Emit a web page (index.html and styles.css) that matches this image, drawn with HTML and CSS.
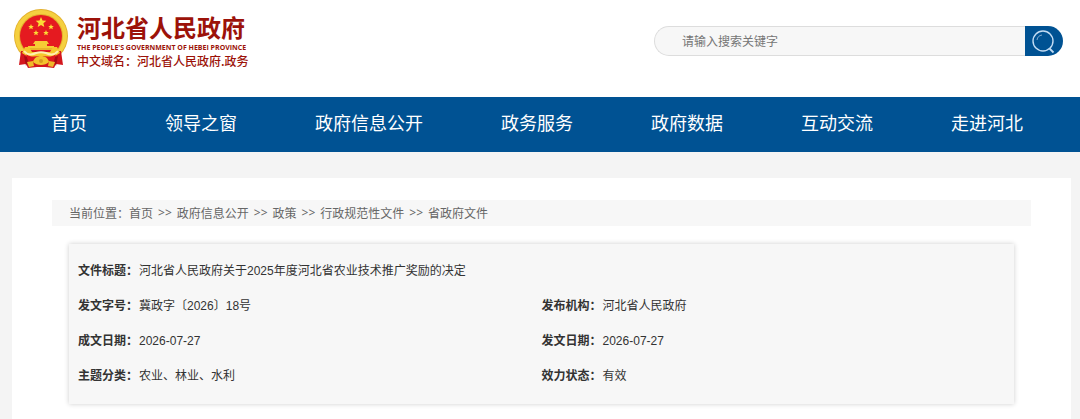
FILE: index.html
```
<!DOCTYPE html>
<html lang="zh-CN">
<head>
    <meta charset="UTF-8">
    <meta name="viewport" content="width=device-width, initial-scale=1.0">
    <title>河北省人民政府</title>
    <link rel="stylesheet" href="styles.css">
</head>
<body>
    <header class="header">
        <a href="#" class="logo">
            <svg class="emblem" viewBox="0 0 54 60" aria-hidden="true">
                <circle cx="27" cy="27" r="27" fill="#e3b02c"/>
                <circle cx="27" cy="27" r="24" fill="none" stroke="#f5d040" stroke-width="4"/>
                <circle cx="27" cy="27" r="21" fill="#e51a20"/>
                <path d="M7 42L5 56l7-1 2 4 9-1h8l9 1 2-4 7 1-2-14z" fill="#d3161d"/>
                <path d="M10 47l2 10 3-8zM44 47l-2 10-3-8z" fill="#a90c14"/>
                <path d="M27 8l1.500 3.500 3.800.3-2.900 2.500.9 3.700-3.300-2-3.300 2 .9-3.700-2.900-2.500 3.800-.3z" fill="#fbdc35"/>
                <g fill="#fbdc35">
                    <path id="star" d="M17 15l.8 1.900 2 .1-1.500 1.300.5 2-1.800-1.100-1.800 1.100.5-2-1.500-1.300 2-.1z"/>
                    <use href="#star" x="20"/>
                    <use href="#star" x="5" y="6"/>
                    <use href="#star" x="15" y="6"/>
                </g>
                <path d="M21 32h12l2 3h-2v2h7v4H14v-4h7v-2h-2z" fill="#f6cd35"/>
                <path d="M14 40h26" stroke="#d99a20"/>
                <path d="M11 38h4l3 5h18l3-5h4l3 6-8 5H16l-8-5z" fill="#f6c62c"/>
                <path d="M12 45c5 4 10 2 15 2s10 2 15-2l-2 7c-4 1-8-2-13-2s-9 3-13 2z" fill="#df171e"/>
                <path d="M10 42c4 5 8 4 12 2 3-1 7-1 10 0 4 2 8 3 12-2" fill="none" stroke="#fff0b0" stroke-width="2"/>
                <path d="M19 53c1-4 4-6 8-6s7 2 8 6c-4 4-12 4-16 0z" fill="#f3c22e"/>
                <circle cx="27" cy="52" r="2" fill="#d99a20"/>
                <path d="M13 53l6-1 1 5-5 1zM41 53l-6-1-1 5 5 1z" fill="#efb92a"/>
            </svg>
            <span class="logo-text">
                <strong class="logo-name">河北省人民政府</strong>
                <span class="logo-en">THE PEOPLE'S GOVERNMENT OF HEBEI PROVINCE</span>
                <span class="logo-domain">中文域名：河北省人民政府.政务</span>
            </span>
        </a>
        <form class="search">
            <input type="text" class="search-input" placeholder="请输入搜索关键字" aria-label="请输入搜索关键字">
            <button type="submit" class="search-button" aria-label="搜索">
                <svg class="search-icon" viewBox="0 0 24 24" fill="none" stroke="#c3dcf3">
                    <circle cx="11" cy="11" r="10" stroke-width="1.400"/>
                    <path d="M5 10c.5-3 2-4.500 5-5" stroke="#7fa9cf"/>
                    <path d="M17.500 18.500l4 4" stroke-width="1.800"/>
                </svg>
            </button>
        </form>
    </header>

    <nav class="navbar">
        <ul>
            <li><a href="#">首页</a></li>
            <li><a href="#">领导之窗</a></li>
            <li><a href="#">政府信息公开</a></li>
            <li><a href="#">政务服务</a></li>
            <li><a href="#">政府数据</a></li>
            <li><a href="#">互动交流</a></li>
            <li><a href="#">走进河北</a></li>
        </ul>
    </nav>

    <main class="container">
        <div class="breadcrumb">
            <span>当前位置：<a href="#">首页</a></span>
            <span class="separator">&gt;&gt;</span>
            <a href="#">政府信息公开</a>
            <span class="separator">&gt;&gt;</span>
            <a href="#">政策</a>
            <span class="separator">&gt;&gt;</span>
            <a href="#">行政规范性文件</a>
            <span class="separator">&gt;&gt;</span>
            <a href="#">省政府文件</a>
        </div>

        <table class="doc-info">
            <tbody>
                <tr>
                    <td colspan="2"><b>文件标题：</b>河北省人民政府关于2025年度河北省农业技术推广奖励的决定</td>
                </tr>
                <tr>
                    <td><b>发文字号：</b>冀政字〔2026〕18号</td>
                    <td><b>发布机构：</b>河北省人民政府</td>
                </tr>
                <tr>
                    <td><b>成文日期：</b>2026-07-27</td>
                    <td><b>发文日期：</b>2026-07-27</td>
                </tr>
                <tr>
                    <td><b>主题分类：</b>农业、林业、水利</td>
                    <td><b>效力状态：</b>有效</td>
                </tr>
            </tbody>
        </table>
    </main>
</body>
</html>
```
FILE: styles.css
```
* {
    box-sizing: border-box;
}

body {
    font-family: "Noto Sans CJK SC", sans-serif;
    font-size: 12px;
    margin: 0;
    background-color: #f4f4f4;
    color: #333;
}

a {
    color: inherit;
    text-decoration: none;
}

.header {
    display: flex;
    justify-content: space-between;
    align-items: flex-start;
    padding: 9px 17px 0 14px;
    min-height: 97px;
    background-color: #fff;
}

.logo {
    display: flex;
    gap: 9px;
    color: #9c1209;
}

.emblem {
    width: 54px;
    height: 60px;
}

.logo-text {
    display: flex;
    flex-direction: column;
    padding-top: 4px;
    white-space: nowrap;
}

.logo-name {
    font-size: 24px;
    line-height: 28px;
}

.logo-en {
    font-family: "Open Sans", sans-serif;
    font-size: 7px;
    font-weight: 700;
    line-height: 14px;
}

.logo-domain {
    font-weight: 500;
    line-height: 12px;
}

.search {
    display: flex;
    width: 39%;
    height: 30px;
    margin-top: 17px;
}

.search-input {
    flex: 1;
    min-width: 0;
    padding: 0 27px 2px;
    border: 1px solid #ddd;
    border-right: none;
    border-radius: 15px 0 0 15px;
    background-color: #f7f7f7;
    font-family: inherit;
    font-size: 12px;
    outline: none;
}

.search-input::placeholder {
    color: #757575;
}

.search-button {
    display: flex;
    align-items: center;
    width: 38px;
    padding: 2px 0 0 7px;
    border: none;
    border-radius: 0 15px 15px 0;
    background-color: #005293;
    cursor: pointer;
}

.search-icon {
    width: 24px;
    height: 24px;
}

.navbar {
    background-color: #005293;
}

.navbar ul {
    display: flex;
    justify-content: space-between;
    margin: 0;
    padding: 0 57px 4px 51px;
    list-style: none;
}

.navbar a {
    display: block;
    color: #fff;
    font-size: 18px;
    line-height: 51px;
}

.container {
    margin: 26px 9px 0 12px;
    padding: 22px 40px 24px;
    background-color: #fff;
}

.breadcrumb {
    display: flex;
    gap: 5px;
    padding: 0 17px;
    background-color: #f7f7f7;
    color: #666;
    line-height: 26px;
}

.separator {
    font-family: "Noto Sans", sans-serif;
}

.doc-info {
    width: calc(100% - 34px);
    margin: 18px 17px 0;
    border-collapse: separate;
    border-spacing: 0;
    padding: 10px 9px;
    table-layout: fixed;
    background-color: #f7f7f7;
    box-shadow: 0 0 5px rgba(0, 0, 0, 0.2);
    font-family: "Liberation Sans", "Noto Sans CJK SC", sans-serif;
}

.doc-info td {
    padding: 0;
    line-height: 35px;
}

.doc-info b {
    margin-right: 1px;
}
```
